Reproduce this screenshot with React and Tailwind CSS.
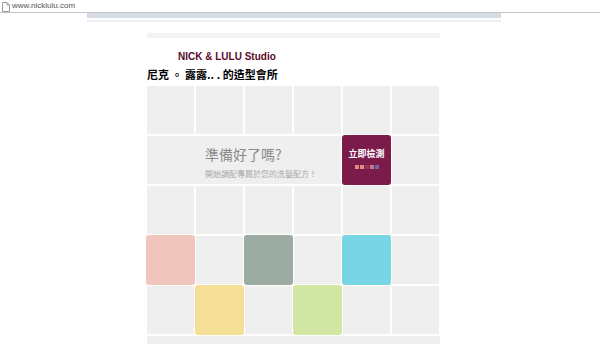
import React from "react";

const G = "bg-[#efefef]";

function Cell({ color }) {
  if (color) {
    return <div className={`-m-[1px] rounded-[3px] ${color}`} />;
  }
  return <div className={G} />;
}

export default function App() {
  const row1 = [null, null, null, null, null, null];
  const row3 = [null, null, null, null, null, null];
  const row4 = ["bg-[#f0c5bb]", null, "bg-[#9baba2]", null, "bg-[#78d6e4]", null];
  const row5 = [null, "bg-[#f5df96]", null, "bg-[#d1e7a3]", null, null];
  return (
    <div className="w-[600px] h-[349px] bg-white overflow-hidden" style={{ fontFamily: '"Liberation Sans", "Noto Sans CJK TC", sans-serif' }}>
      <div className="h-[13px] border-b border-[#c4c4c4] flex items-center pl-[2px] gap-[2px]">
        <svg width="8" height="10" viewBox="0 0 8 10" className="mt-[1px]">
          <path d="M0.5 0.5 H5 L7.5 3 V9.5 H0.5 Z" fill="white" stroke="#9a9a9a" strokeWidth="1" />
          <path d="M5 0.5 V3 H7.5" fill="none" stroke="#9a9a9a" strokeWidth="1" />
        </svg>
        <span className="text-[8px] leading-none text-[#555]">www.nicklulu.com</span>
      </div>
      <div className="ml-[87px] w-[414px]">
        <div className="h-[5px] bg-[#d6dce5]" />
        <div className="h-[2px]" />
        <div className="h-[2px] bg-[#eef0f4]" />
        <div className="ml-[60px] w-[293px]">
          <div className="h-[11px]" />
          <div className="h-[5px] bg-[#f3f3f3]" />
          <div className="pt-[13px] pl-[31px] text-[10px] leading-[12px] font-bold text-[#5a0a2a]">
            NICK &amp; LULU Studio
          </div>
          <div className="pt-[4px] text-[11px] leading-[14px] font-bold text-black" style={{ fontFamily: '"Noto Sans CJK TC", sans-serif' }}>
            尼克 。 露露.. . 的造型會所
          </div>
          <div className="mt-[5px] grid grid-cols-[repeat(6,47px)] grid-rows-[repeat(5,48px)] gap-x-[2px] gap-y-[2px]">
            {row1.map((c, i) => <Cell key={"a" + i} color={c} />)}
            <div className={`col-span-4 ${G} pl-[58px] pt-[10px]`} style={{ fontFamily: '"Noto Sans CJK TC", sans-serif' }}>
              <div className="text-[14px] leading-[17px] text-[#8a8a8a]">準備好了嗎?</div>
              <div className="mt-[6px] text-[8px] leading-[10px] text-[#a8a8a8]">開始調配專屬於您的洗髮配方！</div>
            </div>
            <div className="-m-[1px] rounded-[3px] bg-[#7a1b4a] flex flex-col items-center pt-[13px]">
              <div className="text-[9px] leading-[11px] font-bold text-white" style={{ fontFamily: '"Noto Sans CJK TC", sans-serif' }}>立即檢測</div>
              <div className="mt-[6px] flex gap-[1px]">
                <span className="w-[4px] h-[4px] bg-[#d88a8f]" />
                <span className="w-[4px] h-[4px] bg-[#e0906e]" />
                <span className="w-[4px] h-[4px] bg-[#8e3a62]" />
                <span className="w-[4px] h-[4px] bg-[#c9778f]" />
                <span className="w-[4px] h-[4px] bg-[#6f6aa8]" />
              </div>
            </div>
            <div className={G} />
            {row3.map((c, i) => <Cell key={"c" + i} color={c} />)}
            {row4.map((c, i) => <Cell key={"d" + i} color={c} />)}
            {row5.map((c, i) => <Cell key={"e" + i} color={c} />)}
          </div>
          <div className="mt-[2px] h-[8px] bg-[#efefef]" />
        </div>
      </div>
    </div>
  );
}
